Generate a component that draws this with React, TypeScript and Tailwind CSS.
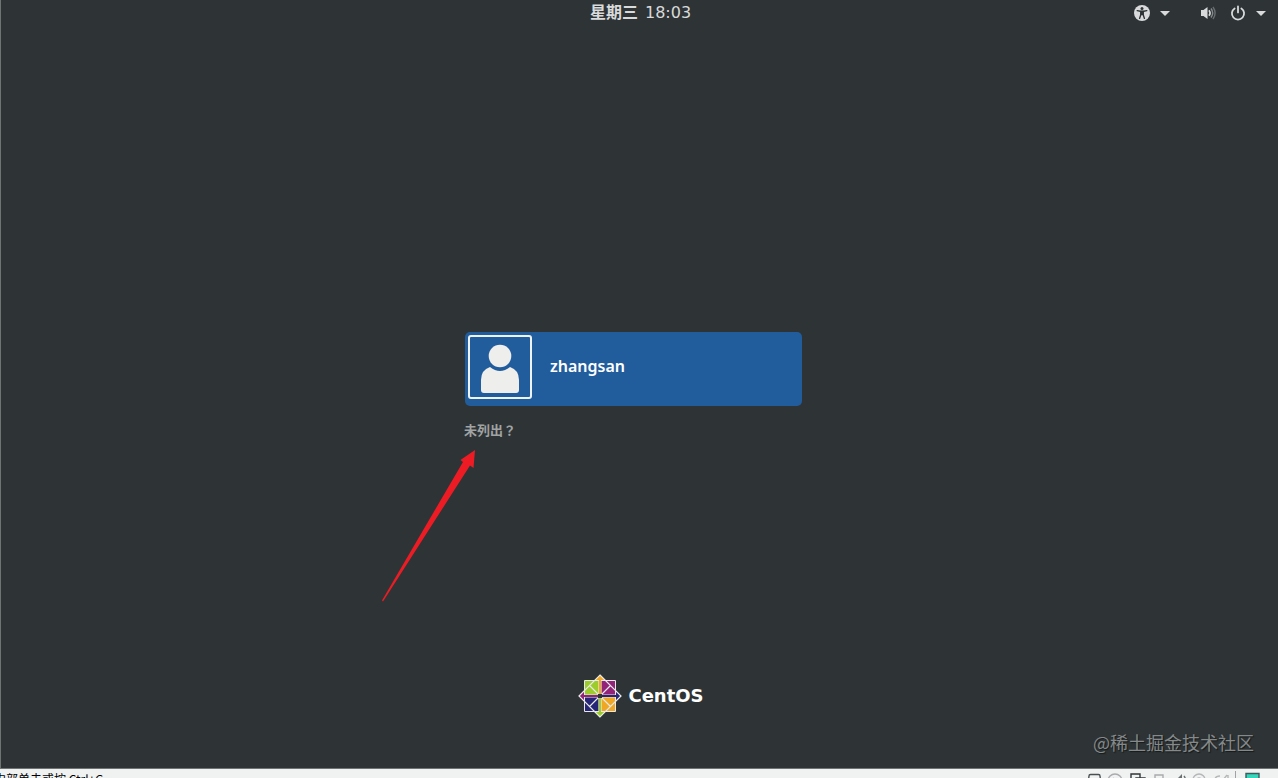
import * as React from 'react'

const cjk = "font-['Noto_Sans_CJK_SC',sans-serif]"

function Caret() {
	return (
		<svg className="w-[10px] h-[5px]" viewBox="0 0 10 5" fill="currentColor" aria-hidden="true">
			<path d="M0 0h10L5 5z" />
		</svg>
	)
}

function AccessIcon() {
	return (
		<svg className="w-4 h-4" viewBox="0 0 16 16" aria-hidden="true">
			<circle cx="8" cy="8" r="8" fill="currentColor" />
			<circle cx="8" cy="3.6" r="1.5" fill="#2e3436" />
			<path
				d="M3.2 5.6l3 .7h3.6l3-.7M6.9 7v2.4L5.6 13.4M9.1 7v2.4l1.3 4"
				fill="none"
				stroke="#2e3436"
				strokeWidth="1.4"
				strokeLinecap="round"
			/>
			<path d="M6.2 5.8h3.6v4.4H6.2z" fill="#2e3436" />
		</svg>
	)
}

function VolumeIcon() {
	return (
		<svg className="w-4 h-4" viewBox="0 0 16 16" fill="none" aria-hidden="true">
			<path d="M1 5h2.5L7.5 2v12l-4-3H1z" fill="currentColor" />
			<path d="M9 5.2q2.2 2.8 0 5.6" stroke="currentColor" strokeWidth="1.6" />
			<path d="M11 3.5q3.4 4.5 0 9" stroke="#85898b" strokeWidth="1.4" />
			<path d="M13 2q4.2 6 0 12" stroke="#686d6f" strokeWidth="1.4" />
		</svg>
	)
}

function PowerIcon() {
	return (
		<svg
			className="w-4 h-4"
			viewBox="0 0 16 16"
			fill="none"
			stroke="currentColor"
			strokeWidth="1.8"
			strokeLinecap="round"
			aria-hidden="true"
		>
			<path d="M4.6 3.4a6.1 6.1 0 1 0 6.8 0M8 1.4v6" />
		</svg>
	)
}

function CentosMark() {
	return (
		<svg className="w-11 h-11" viewBox="-22 -22 44 44" strokeLinejoin="miter" aria-hidden="true">
			<g stroke="#e9e9ea" strokeWidth="1">
				<path d="M-15.5-15.5H0V0h-15.5z" fill="#9ccd2a" />
				<path d="M0-15.5h15.5V0H0z" fill="#932279" />
				<path d="M-15.5 0H0v15.5h-15.5z" fill="#262577" />
				<path d="M0 0h15.5v15.5H0z" fill="#efa724" />
				<path d="M0-21l5.5 5.5h-11z" fill="#efa724" />
				<path d="M21 0l-5.5 5.5v-11z" fill="#262577" />
				<path d="M0 21l-5.5-5.5h11z" fill="#9ccd2a" />
				<path d="M-21 0l5.5-5.5v11z" fill="#932279" />
				<path
					d="M0-21L10.5-10.5 0 0-10.5-10.5zM21 0L10.5 10.5 0 0 10.5-10.5zM0 21L-10.5 10.5 0 0 10.5 10.5zM-21 0L-10.5-10.5 0 0-10.5 10.5z"
					strokeWidth="1.2"
					fill="none"
				/>
			</g>
			<g stroke="#e9e9ea" strokeWidth="3.2">
				<path d="M0-15V15M-15 0H15" />
			</g>
			<g strokeWidth="2">
				<path d="M0-18V-2" stroke="#efa724" />
				<path d="M18 0H2" stroke="#262577" />
				<path d="M0 18V2" stroke="#9ccd2a" />
				<path d="M-18 0H-2" stroke="#932279" />
			</g>
			<path d="M-2-2h4v4h-4z" fill="#2e3436" />
		</svg>
	)
}

// device icons of the virtual machine window, only their tops show
function DeviceIcons() {
	return (
		<svg className="w-[180px] h-4 shrink-0" viewBox="0 0 180 16" fill="none" strokeWidth="1.4" aria-hidden="true">
			<path d="M2 13l1-8q0-1.5 1.500-1.500h8q1.500 0 1.500 1.500l1 8z" stroke="#4b5052" />
			<circle cx="29" cy="10" r="7" stroke="#a9abac" />
			<path d="M27 7l4 3" stroke="#a9abac" />
			<path d="M51 13h-6V3h9v4M50 7h9v8h-9z" stroke="#30363a" />
			<path d="M69 12V4h8v8M66 12h14" stroke="#a9abac" />
			<path d="M88 8h3l5-5v12l-5-4h-3z" fill="#6b6f71" />
			<path d="M98 5q3 4 0 8" stroke="#6b6f71" />
			<circle cx="113" cy="9" r="6" stroke="#b4b6b7" />
			<circle cx="113" cy="9" r="2" stroke="#b4b6b7" />
			<path d="M129 9q0-4 5-4M137 9l4-5M142 4v5" stroke="#b4b6b7" />
			<path d="M149.500 0v16" stroke="#a0a2a3" strokeWidth="1" />
			<path d="M160 2.500h13V14h-13z" fill="#35d6bb" stroke="#3d5b5b" />
		</svg>
	)
}

function TopBar() {
	return (
		<header className="grid grid-cols-[1fr_auto_1fr] items-center h-[26px] text-[#d8dadb]">
			<span />
			<time className="flex gap-[7px] pl-[2px] font-['DejaVu_Sans','Noto_Sans_CJK_SC',sans-serif] text-base leading-6">
				<span className="font-bold">星期三</span>
				<span>18:03</span>
			</time>
			<div className="flex items-center justify-end gap-[30px] pr-3">
				<button type="button" aria-label="辅助功能" className="flex items-center gap-[10px]">
					<AccessIcon />
					<Caret />
				</button>
				<button type="button" aria-label="系统" className="flex items-center">
					<VolumeIcon />
					<span className="flex items-center gap-[10px] ml-[14px]">
						<PowerIcon />
						<Caret />
					</span>
				</button>
			</div>
		</header>
	)
}

function UserButton({ name }: { name: string }) {
	return (
		<button
			type="button"
			className="flex items-center w-full h-[74px] pl-[3px] rounded-[5px] bg-[#215d9c] text-white text-left"
		>
			<span className="w-16 h-16 mb-1 border-2 border-[#eef3f6] rounded-[3px]">
				<svg className="w-[60px] h-[60px]" viewBox="0 0 60 60" fill="#eeeeec" aria-hidden="true">
					<circle cx="30" cy="19" r="11.300" />
					<path d="M11 53V43q0-10 9-13 10 8 20 0 9 3 9 13v10q0 3-3 3H14q-3 0-3-3z" />
				</svg>
			</span>
			<span className="ml-[18px] mb-[6px] font-['Noto_Sans',sans-serif] text-base leading-6 font-semibold">
				{name}
			</span>
		</button>
	)
}

function Pointer() {
	return (
		<svg
			className="absolute -left-[84px] top-[117px] w-24 h-[154px] pointer-events-none"
			viewBox="0 0 96 154"
			fill="#ed1c24"
			aria-hidden="true"
		>
			<path d="M94 1l-1.500 18-3.500-2.500L2 152.500l-1-1L82 13l-2.500-2z" />
		</svg>
	)
}

export default function App() {
	return (
		<div className="flex flex-col h-screen overflow-hidden bg-[#f0f2f2]">
			<main className="relative flex flex-col flex-1 min-h-0 border-l border-b border-[#6e7374] bg-[#2e3436]">
				<TopBar />
				<section className="flex flex-col items-center justify-center flex-1 pt-[72px] pr-3">
					<div className="relative w-[337px]">
						<UserButton name="zhangsan" />
						<button
							type="button"
							className="block mt-[14px] -ml-px font-['Noto_Sans_CJK_TC',sans-serif] text-[13px] leading-5 font-bold text-[#a0a3a3]"
						>
							未列出？
						</button>
						<Pointer />
					</div>
				</section>
				<footer className="flex items-center justify-center gap-[6px] pb-[50px] pl-[3px] text-white">
					<CentosMark />
					<span className="font-['DejaVu_Sans',sans-serif] text-lg leading-6 font-bold">CentOS</span>
				</footer>
				<p
					className={`${cjk} absolute right-6 bottom-[14px] text-lg leading-6 text-[#85898a] [text-shadow:1px_1px_1px_#15191a]`}
				>
					@稀土掘金技术社区
				</p>
			</main>
			<div className="flex items-start justify-between h-[9px] pt-[2px] pr-3 overflow-hidden">
				<p className={`${cjk} -ml-[6px] text-xs leading-4 text-black whitespace-nowrap`}>内部单击或按 Ctrl+G</p>
				<DeviceIcons />
			</div>
		</div>
	)
}
